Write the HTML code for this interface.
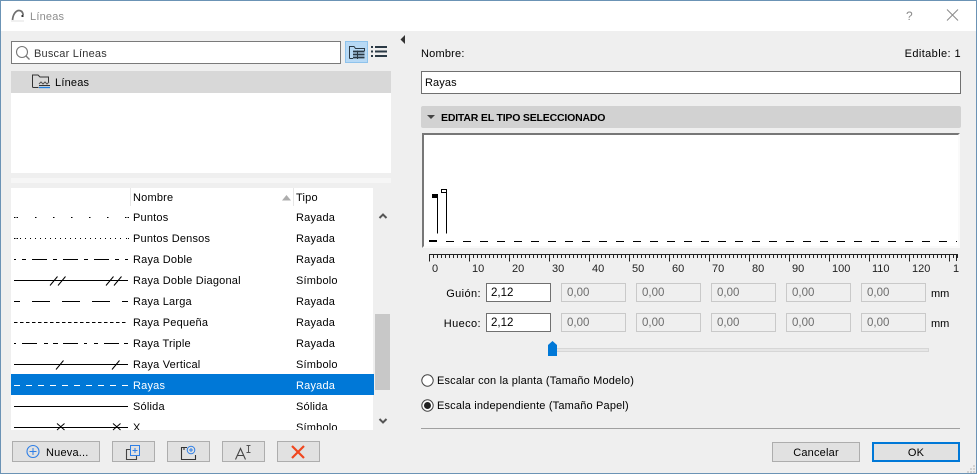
<!DOCTYPE html>
<html><head><meta charset="utf-8"><title>Líneas</title>
<style>
*{box-sizing:border-box}
html,body{margin:0;padding:0;width:977px;height:474px;overflow:hidden;background:#efefef}
body{position:relative;font:11px "Liberation Sans",sans-serif;color:#000;letter-spacing:.2px}
.a,.t,.b{position:absolute}
.t{white-space:nowrap;line-height:14px;height:14px;margin-top:1px}
.b{background:#fff;border:1px solid #7a7a7a}
.d{background:#efefef;border:1px solid #c9c9c9;color:#6d6d6d;padding:2px 0 0 5px;width:65px;height:19px;line-height:15px;font-size:11.5px;letter-spacing:0}
.i{width:65px;height:19px;border-color:#707070;padding:2px 0 0 4px;line-height:15px;font-size:11.5px;letter-spacing:0}
.btn{position:absolute;top:441px;height:21px;background:#e1e1e1;border:1px solid #adadad}
svg{position:absolute;left:0;top:0}
</style></head><body>
<div class="a" style="left:0;top:0;width:977px;height:31px;background:#fff"></div>
<div class="t" style="left:30px;top:9px;color:#8d8d8d;font-size:11px">Líneas</div>
<div class="t" style="left:906px;top:8px;color:#8a8a8a;font-size:12px">?</div>

<div class="b" style="left:11px;top:41px;width:330px;height:23px"></div>
<div class="t" style="left:34px;top:46px;color:#333">Buscar Líneas</div>
<div class="a" style="left:345px;top:41px;width:23px;height:22px;background:#b7d9f5;border:1px solid #8fc3ec"></div>
<div class="a" style="left:11px;top:71px;width:380px;height:102px;background:#fff"></div>
<div class="a" style="left:11px;top:71px;width:380px;height:22px;background:#d8d8d8"></div>
<div class="t" style="left:55px;top:75px">Líneas</div>
<div class="a" style="left:11px;top:178px;width:380px;height:5px;background:#f6f6f6"></div>

<div class="a" style="left:11px;top:188px;width:362px;height:242px;background:#fff"></div>
<div class="a" style="left:11px;top:374px;width:363px;height:21px;background:#0078d7"></div>
<div class="a" style="left:375px;top:314px;width:15px;height:76px;background:#c8c8c8"></div>
<div class="a" style="left:11px;top:188px;width:380px;height:242px;overflow:hidden">
<div class="t" style="left:122px;top:2px">Nombre</div><div class="t" style="left:285px;top:2px">Tipo</div>
<div class="t" style="left:122px;top:22px">Puntos</div><div class="t" style="left:285px;top:22px">Rayada</div>
<div class="t" style="left:122px;top:43px">Puntos Densos</div><div class="t" style="left:285px;top:43px">Rayada</div>
<div class="t" style="left:122px;top:64px">Raya Doble</div><div class="t" style="left:285px;top:64px">Rayada</div>
<div class="t" style="left:122px;top:85px">Raya Doble Diagonal</div><div class="t" style="left:285px;top:85px">Símbolo</div>
<div class="t" style="left:122px;top:106px">Raya Larga</div><div class="t" style="left:285px;top:106px">Rayada</div>
<div class="t" style="left:122px;top:127px">Raya Pequeña</div><div class="t" style="left:285px;top:127px">Rayada</div>
<div class="t" style="left:122px;top:148px">Raya Triple</div><div class="t" style="left:285px;top:148px">Rayada</div>
<div class="t" style="left:122px;top:169px">Raya Vertical</div><div class="t" style="left:285px;top:169px">Símbolo</div>
<div class="t" style="left:122px;top:190px;color:#fff">Rayas</div><div class="t" style="left:285px;top:190px;color:#fff">Rayada</div>
<div class="t" style="left:122px;top:211px">Sólida</div><div class="t" style="left:285px;top:211px">Sólida</div>
<div class="t" style="left:122px;top:232px">X</div><div class="t" style="left:285px;top:232px">Símbolo</div>
</div>

<div class="btn" style="left:12px;width:88px"></div>
<div class="t" style="left:46px;top:445px">Nueva...</div>
<div class="btn" style="left:112px;width:43px"></div>
<div class="btn" style="left:167px;width:43px"></div>
<div class="btn" style="left:222px;width:43px"></div>
<div class="btn" style="left:277px;width:43px"></div>

<div class="t" style="left:421px;top:46px">Nombre:</div>
<div class="t" style="right:16px;top:46px;letter-spacing:.4px">Editable: 1</div>
<div class="b i" style="left:421px;top:71px;width:540px;height:23px;padding:4px 0 0 3px;font-size:11px;letter-spacing:.1px">Rayas</div>
<div class="a" style="left:421px;top:106px;width:540px;height:22px;background:#d2d2d2;border-radius:2px"></div>
<div class="t" style="left:441px;top:110px;font-weight:bold;letter-spacing:-.19px;font-size:10.5px">EDITAR EL TIPO SELECCIONADO</div>
<div class="a" style="left:422px;top:133px;width:538px;height:115px;background:#fff;border-top:2px solid #777;border-left:2px solid #777;border-right:2px solid #fafafa;border-bottom:2px solid #fafafa"></div>

<div class="t" style="left:432px;top:261px;font-size:11px;letter-spacing:0;color:#222">0</div>
<div class="t" style="left:472px;top:261px;letter-spacing:0;color:#222">10</div>
<div class="t" style="left:512px;top:261px;letter-spacing:0;color:#222">20</div>
<div class="t" style="left:552px;top:261px;letter-spacing:0;color:#222">30</div>
<div class="t" style="left:592px;top:261px;letter-spacing:0;color:#222">40</div>
<div class="t" style="left:632px;top:261px;letter-spacing:0;color:#222">50</div>
<div class="t" style="left:672px;top:261px;letter-spacing:0;color:#222">60</div>
<div class="t" style="left:712px;top:261px;letter-spacing:0;color:#222">70</div>
<div class="t" style="left:752px;top:261px;letter-spacing:0;color:#222">80</div>
<div class="t" style="left:792px;top:261px;letter-spacing:0;color:#222">90</div>
<div class="t" style="left:832px;top:261px;letter-spacing:0;color:#222">100</div>
<div class="t" style="left:872px;top:261px;letter-spacing:0;color:#222">110</div>
<div class="t" style="left:912px;top:261px;letter-spacing:0;color:#222">120</div>
<div class="t" style="left:953px;top:261px;letter-spacing:0;color:#222">1</div>

<div class="t" style="right:496px;top:286px;letter-spacing:.4px">Guión:</div>
<div class="t" style="right:496px;top:316px;letter-spacing:.4px">Hueco:</div>
<div class="b i" style="left:486px;top:283px">2,12</div>
<div class="b i" style="left:486px;top:313px">2,12</div>
<div class="a d" style="left:561px;top:283px">0,00</div><div class="a d" style="left:636px;top:283px">0,00</div><div class="a d" style="left:711px;top:283px">0,00</div><div class="a d" style="left:786px;top:283px">0,00</div><div class="a d" style="left:861px;top:283px">0,00</div>
<div class="a d" style="left:561px;top:313px">0,00</div><div class="a d" style="left:636px;top:313px">0,00</div><div class="a d" style="left:711px;top:313px">0,00</div><div class="a d" style="left:786px;top:313px">0,00</div><div class="a d" style="left:861px;top:313px">0,00</div>
<div class="t" style="left:931px;top:286px;letter-spacing:0">mm</div>
<div class="t" style="left:931px;top:316px;letter-spacing:0">mm</div>
<div class="a" style="left:556px;top:348px;width:373px;height:4px;background:#e6e6e6;border:1px solid #d6d6d6"></div>

<div class="t" style="left:437px;top:373px;letter-spacing:.17px">Escalar con la planta (Tamaño Modelo)</div>
<div class="t" style="left:437px;top:398px;letter-spacing:.17px">Escala independiente (Tamaño Papel)</div>
<div class="a" style="left:421px;top:428px;width:539px;height:1px;background:#a0a0a0"></div>
<div class="a" style="left:772px;top:442px;width:88px;height:20px;background:#e1e1e1;border:1px solid #adadad"></div>
<div class="t" style="left:772px;width:88px;text-align:center;top:445px">Cancelar</div>
<div class="a" style="left:872px;top:442px;width:88px;height:20px;background:#e1e1e1;border:2px solid #0078d7"></div>
<div class="t" style="left:872px;width:88px;text-align:center;top:445px">OK</div>

<svg width="977" height="474" viewBox="0 0 977 474" fill="none">
<!-- window border -->
<path d="M.5 474V.5H976.5V474M0 473.5H977" stroke="#6b93b5"/>
<!-- title icon -->
<rect x="11" y="20" width="13" height="2" fill="#f0f0f0"/>
<path d="M12.5 20C13 14 16 10.5 19 10.500C21.500 10.500 22.800 12 23.200 15" stroke="#6f6f6f" stroke-width="1.700"/>
<rect x="21.500" y="15" width="2" height="2" fill="#333"/>
<!-- close -->
<path d="M947 9.500L958 20.500M958 9.500L947 20.500" stroke="#8a8a8a"/>
<!-- search icon -->
<circle cx="22" cy="52" r="5.500" stroke="#777" stroke-width="1.100"/><path d="M26 56L29.500 59.500" stroke="#777" stroke-width="1.300"/>
<!-- view toggle icon -->
<path d="M349.500 58.500V46.500H354L355.500 48.500H364.500V51M349.500 58.500H353" stroke="#2b3a46"/>
<path d="M353 51.500H364.500M353 54.500H364.500M353 57.500H364.500" stroke="#2b3a46" stroke-width="1.700"/><path d="M357.500 50.500V59" stroke="#2b3a46"/>
<!-- list icon -->
<path d="M371 47H373M375 47H387M371 51.500H373M375 51.500H387M371 56H373M375 56H387" stroke="#2b3a46" stroke-width="2"/>
<!-- tree icon -->
<path d="M38.500 87.500H33.500C32.800 87.500 32.500 87 32.500 86.500V75H38L40 77H48.500V83" stroke="#333"/>
<path d="M39 84L41 82L43 84L45 82L47 84L49 82" stroke="#555"/>
<path d="M39 85.500H50" stroke="#333"/><path d="M39 87.500H50" stroke="#1f7fe0" stroke-width="1.300"/>
<!-- header separators and sort -->
<path d="M130.500 188V206M293.500 188V206" stroke="#e6e6e6"/><path d="M373.500 188V206" stroke="#efefef"/>
<path d="M282 200.500L286.500 195L291 200.500Z" fill="#adadad"/>
<!-- scroll arrows -->
<path d="M379.500 218L383 214.500L386.500 218" stroke="#555" stroke-width="2"/>
<path d="M379.500 419L383 422.500L386.500 419" stroke="#555" stroke-width="2"/>
<!-- collapse arrow -->
<path d="M405 35V44L400.500 39.500Z" fill="#333"/>
<!-- line previews -->
<g stroke="#000">
<path d="M14 217.500H15.500M16.500 217.500H18M35 217.500H36.500M53 217.500H54.500M71 217.500H72.500M89 217.500H90.500M107 217.500H108.500M125 217.500H126.500M127.500 217.500H129"/>
<path d="M14 238.500H15.500M16.500 238.500H18" /><path d="M20 238.500H125" stroke-dasharray="1 4"/><path d="M126 238.500H129"  stroke-dasharray="1 1"/>
<path d="M14 259.500H16M22 259.500H26M32 259.500H47M53 259.500H57M63 259.500H78M84 259.500H88M94 259.500H109M115 259.500H119M125 259.500H128"/>
<path d="M14 280.500H128M50 285.500L57.500 276.500M58 285.500L65.500 276.500M106 285.500L113.500 276.500M114 285.500L121.500 276.500"/>
<path d="M14 301.500H20M32 301.500H50M62 301.500H80M92 301.500H110M122 301.500H128"/>
<path d="M14 322.500H128" stroke-dasharray="3.500 2.500"/>
<path d="M14 343.500H16M22 343.500H37M44 343.500H48M53 343.500H58M63 343.500H78M84 343.500H87M94 343.500H98M104 343.500H119M124 343.500H128"/>
<path d="M14 364.500H128M56 369.500L63.500 360.500M112 369.500L119.500 360.500"/>
<path d="M14 385.500H128" stroke="#fff" stroke-dasharray="6 6"/>
<path d="M14 406.500H128"/>
<path d="M14 427.500H128"/><path d="M57 423.500L64.500 430M64.500 423.500L57 430M113 423.500L120.500 430M120.500 423.500L113 430"/>
</g>
<!-- button icons -->
<circle cx="33" cy="451.500" r="6" stroke="#2f7fe6" stroke-width="1.100"/><path d="M29.500 451.500H36.500M33 448V455" stroke="#2f7fe6"/>
<path d="M130.500 449.500H126.500V459.500H136.500V456" stroke="#444" stroke-width="1.100"/>
<rect x="130.500" y="445.500" width="9" height="10" stroke="#2f7fe6" fill="#e1e1e1"/><path d="M132.500 450.500H137.500M135 448V453" stroke="#2f7fe6"/>
<path d="M187 447.500H181.500V459.500H195.500V455M184 447.500V450" stroke="#333" stroke-width="1.100"/>
<circle cx="191" cy="450" r="3.800" stroke="#2f7fe6"/><path d="M189 450H193M191 448V452" stroke="#2f7fe6"/>
<path d="M235.500 459.500L240.500 448.500L245.500 459.500M237.500 455.500H243.500" stroke="#444" stroke-width="1.100"/>
<path d="M246.500 445.500H250.500M246.500 452.500H250.500M248.500 445.500V452.500" stroke="#555"/>
<path d="M292 446L304 458M304 446L292 458" stroke="#f0461e" stroke-width="2.200"/>
<!-- marks -->
<rect x="432" y="194" width="6" height="4" fill="#000"/><path d="M437.500 194V233.500" stroke="#000"/>
<rect x="441.500" y="189.500" width="5" height="3" stroke="#000" fill="#fff"/><path d="M446.500 189V233.500" stroke="#000"/>
<rect x="429" y="240" width="8" height="2" fill="#000"/>
<path d="M446 241.500H955" stroke="#000" stroke-dasharray="8 9"/><rect x="956" y="241" width="1" height="1" fill="#000"/>
<!-- ruler -->
<path d="M429 254.500H958" stroke="#222"/>
<path d="M429 256.500H958" stroke="#222" stroke-width="3" stroke-dasharray="1 3"/>
<path d="M429 258H958" stroke="#222" stroke-width="7" stroke-dasharray="1 39"/>
<path d="M956.500 254V261" stroke="#222"/>
<!-- slider thumb -->
<path d="M548 356V345L552.500 341L557 345V356Z" fill="#0078d7"/>
<!-- radios -->
<circle cx="427.500" cy="380.500" r="5.700" stroke="#444" fill="#fff"/>
<circle cx="427.500" cy="405.500" r="5.700" stroke="#444" fill="#fff"/><circle cx="427.500" cy="405.500" r="3.500" fill="#222"/>
<!-- small triangle -->
<path d="M427 115H435L431 119Z" fill="#444"/>
<!-- grip -->
<path d="M973 472H975M970 472H972M967 472H969M973 469H975M970 469H972M973 466H975" stroke="#b5b5b5"/>
</svg>
</body></html>
